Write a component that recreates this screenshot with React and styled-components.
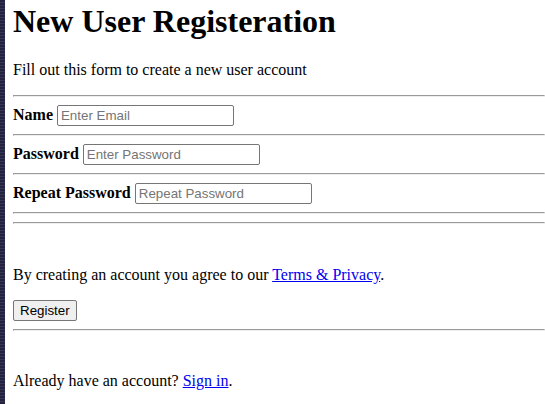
import React from "react";
import styled, { createGlobalStyle } from "styled-components";

const GlobalStyle = createGlobalStyle`
  html, body {
    margin: 0;
    padding: 0;
    background: #ffffff;
  }
  body {
    font-family: "Liberation Serif", "Times New Roman", serif;
    font-size: 16px;
    color: #000;
    overflow: hidden;
  }
`;

const Page = styled.div`
  display: flex;
  min-height: 404px;
`;

const EdgeStrip = styled.div`
  flex: 0 0 5px;
  background: repeating-linear-gradient(
    to bottom,
    #23233d 0px,
    #23233d 2px,
    #36365a 2px,
    #36365a 3px
  );
`;

const Form = styled.form`
  flex: 1;
  padding: 3px 0 0 8px;
`;

const Title = styled.h1`
  margin: 0 0 21px;
  font-size: 32px;
  font-weight: bold;
  white-space: nowrap;
`;

const Text = styled.p`
  margin: ${(p) => p.$top || 0}px 0 16px;
  white-space: nowrap;
`;

const Rule = styled.hr`
  margin: 8px 0;
  border-width: 1px;
  border-style: inset;
  color: gray;
`;

const Field = styled.div`
  display: flex;
  align-items: baseline;
  gap: 4px;
  height: 21px;
`;

const Label = styled.label`
  font-weight: bold;
  white-space: nowrap;
`;

const Input = styled.input`
  box-sizing: border-box;
  width: 177px;
  height: 21px;
  padding: 1px 3px;
  border: 1px solid #767676;
  border-radius: 2px;
  font-family: "Liberation Sans", Arial, sans-serif;
  font-size: 13.333px;
  color: #000;
  background: #fff;

  &::placeholder {
    color: #757575;
  }
`;

const Button = styled.button`
  display: block;
  box-sizing: border-box;
  height: 21px;
  padding: 1px 6px;
  border: 1px solid #767676;
  border-radius: 2px;
  background: #efefef;
  font-family: "Liberation Sans", Arial, sans-serif;
  font-size: 13.333px;
  color: #000;
`;

const Link = styled.a`
  color: #0000ee;
  text-decoration: underline;
`;

const fields = [
  { id: "name", label: "Name", placeholder: "Enter Email", type: "text" },
  { id: "password", label: "Password", placeholder: "Enter Password", type: "password" },
  { id: "repeat", label: "Repeat Password", placeholder: "Repeat Password", type: "password" },
];

export default function App() {
  return (
    <>
      <GlobalStyle />
      <Page>
        <EdgeStrip />
        <Form onSubmit={(e) => e.preventDefault()}>
          <Title>New User Registeration</Title>
          <Text>Fill out this form to create a new user account</Text>
          <Rule />
          {fields.map((f) => (
            <React.Fragment key={f.id}>
              <Field>
                <Label htmlFor={f.id}>{f.label}</Label>
                <Input id={f.id} type={f.type} placeholder={f.placeholder} />
              </Field>
              <Rule />
            </React.Fragment>
          ))}
          <Rule />
          <Text $top={42}>
            By creating an account you agree to our <Link href="#">Terms &amp; Privacy</Link>.
          </Text>
          <Button type="submit">Register</Button>
          <Rule />
          <Text $top={41}>
            Already have an account? <Link href="#">Sign in</Link>.
          </Text>
        </Form>
      </Page>
    </>
  );
}
